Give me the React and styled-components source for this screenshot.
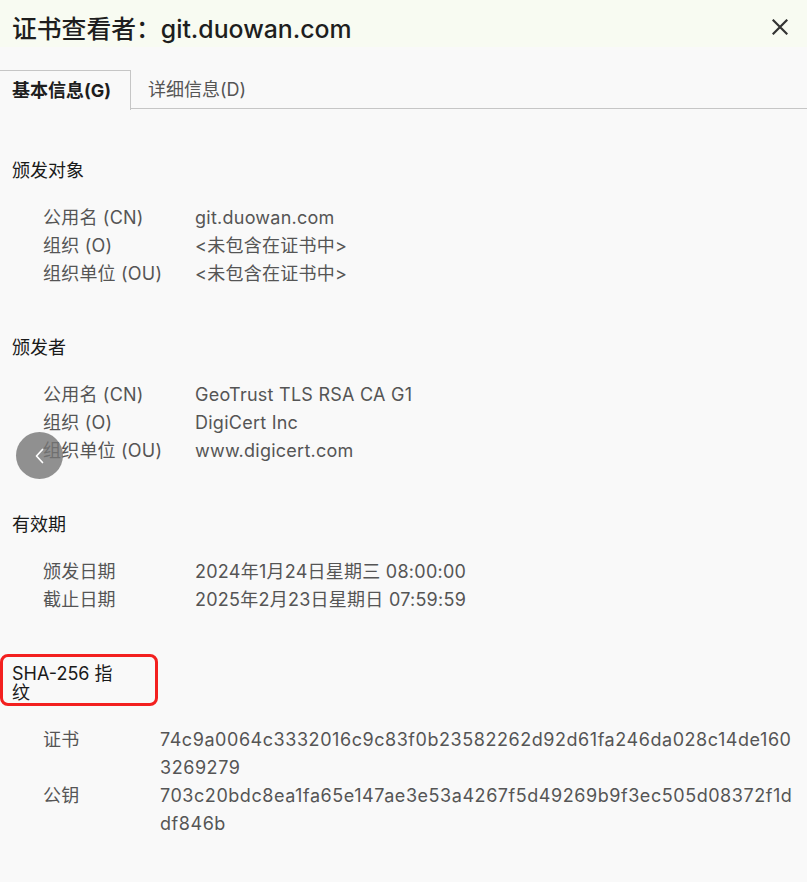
import React from 'react';
import styled, { createGlobalStyle } from 'styled-components';

const Global = createGlobalStyle`
  html, body { margin: 0; padding: 0; background: #f9f9f9; }
  body { font-family: Inter, "Noto Sans CJK SC", sans-serif; -webkit-font-smoothing: antialiased; }
  * { box-sizing: border-box; }
`;

const Window = styled.div`
  position: relative;
  width: 807px;
  height: 882px;
  background: #f9f9f9;
  display: flex;
  flex-direction: column;
  overflow: hidden;
`;

const TitleBar = styled.header`
  height: 47px;
  padding: 10px 19px 0 12px;
  background: #f8fbf2;
  display: flex;
  align-items: center;
  justify-content: space-between;
`;

const Title = styled.h1`
  margin: 0;
  font-size: 24.8px;
  font-weight: 500;
  line-height: 30px;
  color: #1e1e1e;
`;

const CloseButton = styled.button`
  border: 0;
  background: none;
  padding: 0;
  width: 17px;
  height: 17px;
  display: flex;
  align-items: center;
  justify-content: center;
  margin-top: -3px;
  cursor: pointer;
`;

const TabBar = styled.nav`
  display: flex;
  margin-top: 23px;
  height: 39px;
  border-bottom: 1px solid #c6c6c6;
`;

const Tab = styled.div`
  height: 39px;
  display: flex;
  align-items: center;
  font-size: 18px;
  line-height: 24px;
  ${(p) =>
    p.$active
      ? `
    width: 131px;
    padding: 0 12px;
    border-top: 1px solid #c6c6c6;
    border-right: 1px solid #c6c6c6;
    margin-bottom: -1px;
    height: 40px;
    background: #f9f9f9;
    font-weight: 700;
    color: #1e1e1e;
  `
      : `
    padding: 0 17px;
    color: #555;
  `}
`;

const Content = styled.main`
  padding: 52px 12px 0 12px;
  display: flex;
  flex-direction: column;
  gap: 50px;
`;

const Section = styled.section`
  display: flex;
  flex-direction: column;
  gap: 24px;
`;

const HeadingWrap = styled.div`
  position: relative;
  align-self: flex-start;
`;

const Heading = styled.h2`
  margin: 0;
  max-width: 118px;
  font-size: 18px;
  font-weight: 400;
  line-height: 19px;
  color: #1a1a1a;
`;

const Highlight = styled.div`
  position: absolute;
  left: -12px;
  top: -10px;
  width: 158px;
  height: 52px;
  border: 3px solid #f3201f;
  border-radius: 8px;
  pointer-events: none;
`;

const Rows = styled.dl`
  margin: 0;
  padding-left: 31px;
  display: grid;
  grid-template-columns: ${(p) => p.$labelWidth}px 1fr;
  font-size: 18px;
  line-height: 28px;
  letter-spacing: 0.2px;
  color: #555;
`;

const Label = styled.dt`
  margin: 0;
  white-space: nowrap;
`;

const Value = styled.dd`
  margin: 0;
  word-break: break-all;
  letter-spacing: ${(p) => (p.$hash ? '0.55px' : '0.25px')};
`;

const BackButton = styled.button`
  position: absolute;
  left: 16px;
  top: 432px;
  width: 47px;
  height: 47px;
  border: 0;
  padding: 0;
  border-radius: 50%;
  background: rgba(118, 118, 118, 0.8);
  display: flex;
  align-items: center;
  justify-content: center;
  cursor: pointer;
`;

const sections = [
  {
    title: '颁发对象',
    labelWidth: 152,
    rows: [
      ['公用名 (CN)', 'git.duowan.com'],
      ['组织 (O)', '<未包含在证书中>'],
      ['组织单位 (OU)', '<未包含在证书中>'],
    ],
  },
  {
    title: '颁发者',
    labelWidth: 152,
    rows: [
      ['公用名 (CN)', 'GeoTrust TLS RSA CA G1'],
      ['组织 (O)', 'DigiCert Inc'],
      ['组织单位 (OU)', 'www.digicert.com'],
    ],
  },
  {
    title: '有效期',
    labelWidth: 152,
    rows: [
      ['颁发日期', '2024年1月24日星期三 08:00:00'],
      ['截止日期', '2025年2月23日星期日 07:59:59'],
    ],
  },
  {
    title: 'SHA-256 指纹',
    labelWidth: 117,
    highlight: true,
    hash: true,
    rows: [
      ['证书', '74c9a0064c3332016c9c83f0b23582262d92d61fa246da028c14de1603269279'],
      ['公钥', '703c20bdc8ea1fa65e147ae3e53a4267f5d49269b9f3ec505d08372f1ddf846b'],
    ],
  },
];

export default function App() {
  return (
    <>
      <Global />
      <Window>
        <TitleBar>
          <Title>证书查看者：git.duowan.com</Title>
          <CloseButton aria-label="关闭">
            <svg width="16" height="16" viewBox="0 0 16 16">
              <path d="M1.5 1.5 L14.5 14.5 M14.5 1.5 L1.5 14.5" stroke="#333" strokeWidth="2.2" strokeLinecap="square" fill="none" />
            </svg>
          </CloseButton>
        </TitleBar>
        <TabBar>
          <Tab $active>基本信息(G)</Tab>
          <Tab>详细信息(D)</Tab>
        </TabBar>
        <Content>
          {sections.map((s) => (
            <Section key={s.title}>
              <HeadingWrap>
                <Heading>{s.title}</Heading>
                {s.highlight && <Highlight />}
              </HeadingWrap>
              <Rows $labelWidth={s.labelWidth}>
                {s.rows.map(([k, v]) => (
                  <React.Fragment key={k}>
                    <Label>{k}</Label>
                    <Value $hash={s.hash}>{v}</Value>
                  </React.Fragment>
                ))}
              </Rows>
            </Section>
          ))}
        </Content>
        <BackButton aria-label="返回">
          <svg width="10" height="16" viewBox="0 0 10 16">
            <path d="M7.5 1.5 L1.5 8 L7.5 14.5" stroke="#fff" strokeWidth="1.7" fill="none" strokeLinecap="round" strokeLinejoin="round" />
          </svg>
        </BackButton>
      </Window>
    </>
  );
}
